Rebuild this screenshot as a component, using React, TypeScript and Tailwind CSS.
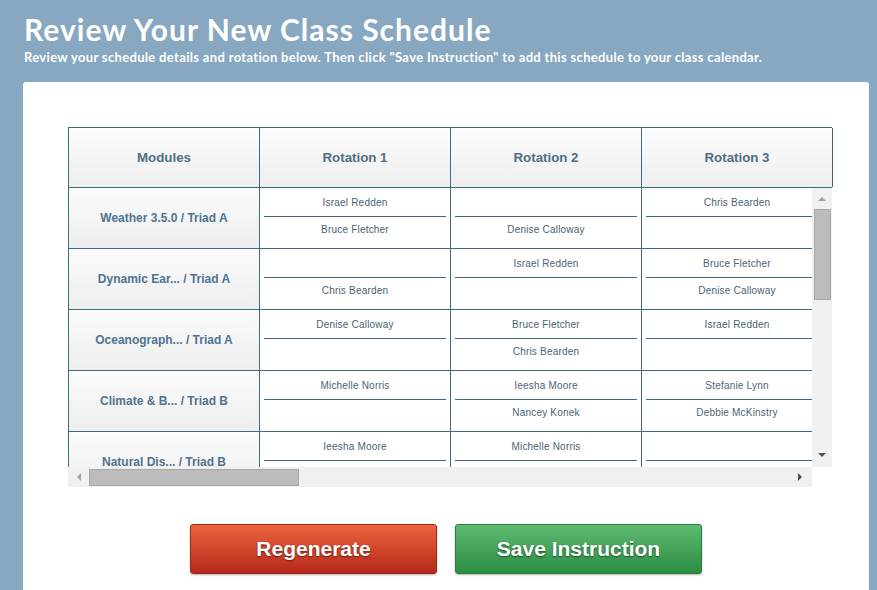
import React from "react";

type Row = { module: string; slots: [string, string][] };

const rows: Row[] = [
  { module: "Weather 3.5.0 / Triad A", slots: [["Israel Redden", "Bruce Fletcher"], ["", "Denise Calloway"], ["Chris Bearden", ""]] },
  { module: "Dynamic Ear... / Triad A", slots: [["", "Chris Bearden"], ["Israel Redden", ""], ["Bruce Fletcher", "Denise Calloway"]] },
  { module: "Oceanograph... / Triad A", slots: [["Denise Calloway", ""], ["Bruce Fletcher", "Chris Bearden"], ["Israel Redden", ""]] },
  { module: "Climate & B... / Triad B", slots: [["Michelle Norris", ""], ["Ieesha Moore", "Nancey Konek"], ["Stefanie Lynn", "Debbie McKinstry"]] },
  { module: "Natural Dis... / Triad B", slots: [["Ieesha Moore", ""], ["Michelle Norris", ""], ["", ""]] },
];

const headers = ["Modules", "Rotation 1", "Rotation 2", "Rotation 3"];

export default function App() {
  return (
    <div className="w-[877px] h-[590px] overflow-hidden bg-[#87a8c0]" style={{ fontFamily: "'Liberation Sans', Arial, sans-serif" }}>
      <div className="pl-[24px] pt-[11px]">
        <h1 className="text-[30px] leading-[36px] font-bold text-white tracking-[1px]" style={{ fontFamily: "Lato, 'Open Sans', sans-serif" }}>
          Review Your New Class Schedule
        </h1>
        <p className="text-[13px] leading-[16px] font-bold text-white mt-[2px] tracking-[0.33px]" style={{ fontFamily: "Lato, 'Open Sans', sans-serif" }}>
          Review your schedule details and rotation below. Then click "Save Instruction" to add this schedule to your class calendar.
        </p>
      </div>
      <div className="ml-[23px] mt-[17px] w-[846px] h-[520px] bg-white rounded-t-[3px] pt-[45px] pl-[45px]">
        <div className="w-[764px]">
          {/* header */}
          <div className="flex border-t border-b border-[#3e6a82] h-[61px]">
            {headers.map((h, i) => (
              <div
                key={h}
                className={`${i === 0 ? "border-l w-[192px]" : "w-[191px]"} shrink-0 border-r border-[#3e6a82] bg-gradient-to-b from-[#fdfcfc] to-[#eeeeee] flex items-center justify-center text-[13.3px] font-bold text-[#4d6f88]`}
              >
                {h}
              </div>
            ))}
          </div>
          {/* body */}
          <div className="flex">
            <div className="w-[744px] h-[279px] overflow-hidden">
              <div className="w-[765px]">
                {rows.map((r) => (
                  <div key={r.module} className="flex h-[61px]">
                    <div className="w-[192px] shrink-0 border-l border-r border-b border-[#3e6a82] bg-gradient-to-b from-[#fcfbfb] to-[#eeeeee] flex items-center justify-center text-[12px] font-bold text-[#4f7391]">
                      {r.module}
                    </div>
                    {r.slots.map((s, j) => (
                      <div key={j} className="w-[191px] shrink-0 border-r border-b border-[#3e6a82] px-[4px]">
                        <div className="h-[29px] border-b border-[#3e6a82] flex items-center justify-center text-[10px] text-[#4a6273] tracking-[0.2px]">
                          {s[0]}
                        </div>
                        <div className="h-[24px] flex items-center justify-center text-[10px] text-[#4a6273] tracking-[0.2px]">
                          {s[1]}
                        </div>
                      </div>
                    ))}
                  </div>
                ))}
              </div>
            </div>
            {/* vertical scrollbar */}
            <div className="w-[20px] h-[279px] bg-[#f0f0f0] flex flex-col items-center">
              <div className="h-[21px] flex items-center justify-center">
                <div className="w-0 h-0 border-l-[4px] border-r-[4px] border-b-[4px] border-l-transparent border-r-transparent border-b-[#a3a3a3]" />
              </div>
              <div className="w-[17px] h-[91px] bg-[#bcbcbc] border border-[#a8a8a8]" />
              <div className="flex-1" />
              <div className="h-[24px] flex items-center justify-center">
                <div className="w-0 h-0 border-l-[4px] border-r-[4px] border-t-[4px] border-l-transparent border-r-transparent border-t-[#505050]" />
              </div>
            </div>
          </div>
          {/* horizontal scrollbar */}
          <div className="w-[744px] h-[20px] bg-[#f0f0f0] flex items-center">
            <div className="w-[21px] flex items-center justify-center">
              <div className="w-0 h-0 border-t-[4px] border-b-[4px] border-r-[4px] border-t-transparent border-b-transparent border-r-[#a3a3a3]" />
            </div>
            <div className="w-[210px] h-[17px] bg-[#bcbcbc] border border-[#a8a8a8]" />
            <div className="flex-1" />
            <div className="w-[24px] flex items-center justify-center">
              <div className="w-0 h-0 border-t-[4px] border-b-[4px] border-l-[4px] border-t-transparent border-b-transparent border-l-[#505050]" />
            </div>
          </div>
        </div>
        {/* buttons */}
        <div className="flex justify-center gap-[18px] mt-[37px] pr-[45px]">
          <button
            className="w-[247px] h-[50px] rounded-[3px] border border-[#982a1d] bg-gradient-to-b from-[#ec633c] to-[#b6271b] text-white text-[21px] font-bold shadow-[0_1px_2px_rgba(0,0,0,0.3)]"
            style={{ textShadow: "0 1px 2px rgba(0,0,0,0.55)" }}
          >
            Regenerate
          </button>
          <button
            className="w-[247px] h-[50px] rounded-[3px] border border-[#2a7a3e] bg-gradient-to-b from-[#5cba71] to-[#2c8d45] text-white text-[21px] font-bold shadow-[0_1px_2px_rgba(0,0,0,0.3)]"
            style={{ textShadow: "0 1px 2px rgba(0,0,0,0.55)" }}
          >
            Save Instruction
          </button>
        </div>
      </div>
    </div>
  );
}
